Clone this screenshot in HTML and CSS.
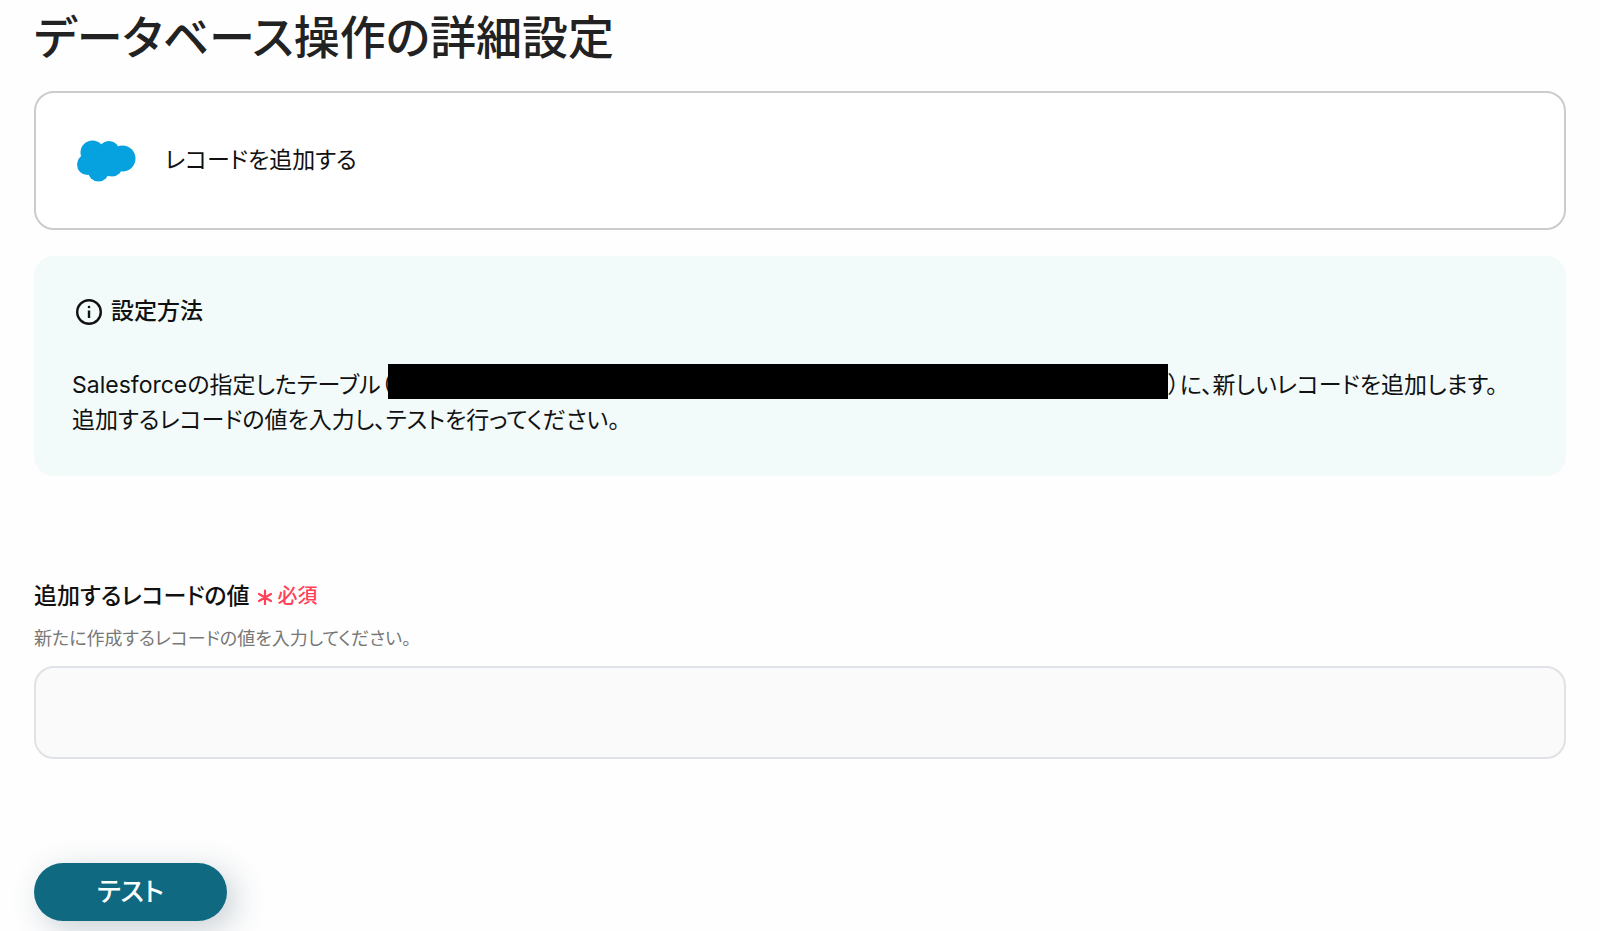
FILE: index.html
```html
<!DOCTYPE html>
<html lang="ja">
<head>
    <meta charset="UTF-8">
    <meta name="viewport" content="width=device-width, initial-scale=1.0">
    <title>データベース操作の詳細設定</title>
    <link rel="stylesheet" href="styles.css">
</head>

<body>
<main class="page">
    <h1 class="page-title">データベース操作の詳細設定</h1>

    <section class="action-card">
        <svg class="action-logo" viewBox="0 0 60 44" aria-hidden="true">
            <g fill="#06a2e0">
                <circle cx="16.500" cy="13.500" r="12"/>
                <circle cx="33" cy="12.500" r="10.500"/>
                <circle cx="46.500" cy="19.500" r="13"/>
                <circle cx="11.500" cy="25.500" r="10.500"/>
                <circle cx="22.500" cy="32" r="10.500"/>
                <circle cx="36" cy="27" r="10.500"/>
                <rect x="14" y="12" width="30" height="18"/>
            </g>
        </svg>
        <span class="action-name">レコードを追加する</span>
    </section>

    <section class="guide">
        <h2 class="guide-title">
            <svg class="info-icon" viewBox="0 0 26 26" aria-hidden="true">
                <circle cx="13" cy="13" r="11.800" fill="none" stroke="currentColor" stroke-width="2.400"/>
                <circle cx="13" cy="8" r="1.300" fill="currentColor"/>
                <path d="M13 11.500v7.500" stroke="currentColor" stroke-width="2.400"/>
            </svg>
            設定方法
        </h2>
        <p class="guide-text">Salesforceの指定したテーブル（<span class="masked"></span>）に、新しいレコードを追加します。<br>追加するレコードの値を入力し、テストを行ってください。</p>
    </section>

    <form class="record-form">
        <div class="field-head">
            <label class="field-label" for="record-value">追加するレコードの値</label>
            <span class="required">
                <svg class="required-mark" viewBox="0 0 14 16" aria-hidden="true">
                    <path d="M7 1.500v14M1 5l12 7M13 5l-12 7" stroke="currentColor" stroke-width="2.200" stroke-linecap="round"/>
                </svg>
                必須
            </span>
        </div>
        <p class="field-note" id="record-note">新たに作成するレコードの値を入力してください。</p>
        <input class="field-input" id="record-value" type="text" aria-describedby="record-note" required>
        <button class="test-btn" type="button">テスト</button>
    </form>
</main>
</body>
</html>
```
FILE: styles.css
```css
* {
    box-sizing: border-box;
}

body {
    margin: 0;
    background-color: #fefefe;
    color: #111;
    font-family: Inter, 'Noto Sans CJK JP', sans-serif;
    font-size: 23px;
    line-height: 35px;
    font-feature-settings: "palt";
}

.page {
    padding: 7px 34px 10px;
}

.page-title {
    margin: 0 0 24px;
    color: #222;
    font-size: 46px;
    font-weight: 500;
    line-height: 60px;
}

.action-card {
    display: flex;
    align-items: center;
    gap: 29px;
    min-height: 139px;
    padding: 24px 40px;
    background-color: #fff;
    border: 2px solid #ccc;
    border-radius: 20px;
}

.action-logo {
    width: 60px;
    height: 44px;
}

.guide {
    margin-top: 26px;
    padding: 38px;
    background-color: #f2fbfa;
    border-radius: 20px;
}

.guide-title {
    display: flex;
    align-items: center;
    gap: 9px;
    margin: 0 0 39px;
    padding-left: 4px;
    font-size: 23px;
    font-weight: 500;
}

.info-icon {
    width: 26px;
    height: 26px;
}

.guide-text {
    margin: 0;
}

/* hidden table name, slightly over the opening bracket */
.masked {
    display: inline-block;
    width: 780px;
    height: 35px;
    margin: -4px 0 0 -4px;
    background-color: #000;
    vertical-align: top;
}

.record-form {
    margin-top: 103px;
}

.field-head {
    display: flex;
    align-items: center;
    gap: 8px;
}

.field-label {
    font-weight: 500;
}

.required {
    display: flex;
    align-items: center;
    gap: 6px;
    color: #ff4258;
    font-size: 20px;
    font-weight: 500;
}

.required-mark {
    width: 14px;
    height: 16px;
}

.field-note {
    margin: 8px 0 10px;
    color: #777;
    font-size: 18px;
    line-height: 34px;
}

.field-input {
    display: block;
    width: 100%;
    height: 93px;
    padding: 0 24px;
    background-color: #fafafa;
    border: 2px solid #dfe2e6;
    border-radius: 20px;
    font: inherit;
}

.test-btn {
    margin-top: 104px;
    padding: 11px 63px;
    background-color: #0e6981;
    border: none;
    border-radius: 29px;
    box-shadow: 8px 8px 32px rgba(30, 60, 80, 0.24);
    color: #fff;
    font-family: inherit;
    font-size: 26px;
    font-weight: 500;
    line-height: 36px;
    font-feature-settings: inherit;
    cursor: pointer;
}
```
